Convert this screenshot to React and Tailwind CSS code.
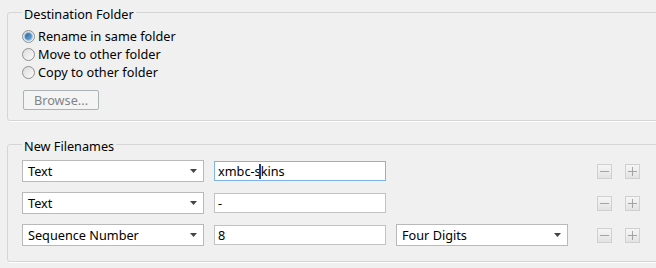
import React from 'react';

function Radio({ checked, label }) {
  return (
    <div className="flex items-center h-[18px]">
      <span className="w-[13px] h-[13px] rounded-full border border-[#8e8f8f] bg-gradient-to-br from-[#dcdcdc] to-[#fbfbfb] flex items-center justify-center">
        {checked && (
          <span className="w-[7px] h-[7px] rounded-full bg-gradient-to-br from-[#2a628f] to-[#6fb0e8] shadow-[0_0_0_1px_#9fc4e6]" />
        )}
      </span>
      <span className="ml-[3px] text-black">{label}</span>
    </div>
  );
}

function Combo({ value, width }) {
  return (
    <div className={`${width} h-[22px] bg-white border border-[#b9b9b9] flex items-center justify-between pl-[5px] pr-[6px]`}>
      <span className="text-black">{value}</span>
      <svg width="7" height="4" viewBox="0 0 7 4">
        <path d="M0 0 L7 0 L3.5 4 Z" fill="#444" />
      </svg>
    </div>
  );
}

function TextBox({ children, focused }) {
  return (
    <div
      className={`w-[172px] h-[20px] bg-white border flex items-center px-[3px] ${
        focused ? 'border-[#7eb4ea]' : 'border-[#c2c2c2]'
      }`}
    >
      {children}
    </div>
  );
}

function SmallButton({ plus }) {
  return (
    <div className="w-[15px] h-[15px] border border-[#d0d0d0] bg-gradient-to-b from-[#f6f6f6] to-[#e3e3e3] flex items-center justify-center">
      <svg width="9" height="9" viewBox="0 0 9 9">
        <path d="M0 4.5 H9" stroke="#a3a3a3" strokeWidth="1" />
        {plus && <path d="M4.5 0 V9" stroke="#a3a3a3" strokeWidth="1" />}
      </svg>
    </div>
  );
}

function Row({ type, value, focused, extra }) {
  return (
    <div className="flex items-center h-[22px]">
      <Combo value={type} width="w-[182px]" />
      <div className="ml-[10px]">
        <TextBox focused={focused}>{value}</TextBox>
      </div>
      <div className="ml-[10px] w-[172px]">
        {extra && <Combo value={extra} width="w-[172px]" />}
      </div>
      <div className="ml-[29px] flex items-center gap-[13px]">
        <SmallButton />
        <SmallButton plus />
      </div>
    </div>
  );
}

export default function App() {
  return (
    <div className="w-[656px] h-[268px] bg-[#f0f0f0] overflow-hidden pt-[2px] pl-[7px] font-['Segoe_UI','Noto_Sans',sans-serif] text-[12.7px] leading-[16px]">
      <fieldset className="w-[670px] h-[119px] border border-[#d5d5d5] rounded-[3px] shadow-[1px_1px_0_#fff] pl-[14px]">
        <legend className="px-[2px] pt-[4px] text-black">Destination Folder</legend>
        <div className="pt-[5px]">
          <Radio checked label="Rename in same folder" />
          <Radio label="Move to other folder" />
          <Radio label="Copy to other folder" />
        </div>
        <div className="mt-[9px] ml-[1px] w-[76px] h-[20px] border border-[#adb2b5] rounded-[2px] bg-[#f4f4f4] flex items-center justify-center text-[#838383]">
          Browse...
        </div>
      </fieldset>

      <fieldset className="mt-[13px] w-[670px] h-[128px] border border-[#d5d5d5] rounded-[3px] shadow-[1px_1px_0_#fff] pl-[14px]">
        <legend className="px-[2px] pt-[4px] text-black">New Filenames</legend>
        <div className="pt-[6px] flex flex-col gap-[10px]">
          <Row
            type="Text"
            focused
            value={
              <span className="text-black">
                xmbc-s
                <span className="relative inline-block w-0">
                  <span className="absolute left-[-2px] top-[-12px] w-[2px] h-[15px] bg-[#1c3f8c]" />
                </span>
                kins
              </span>
            }
          />
          <Row type="Text" value={<span className="text-black">-</span>} />
          <Row type="Sequence Number" value={<span className="text-black">8</span>} extra="Four Digits" />
        </div>
      </fieldset>
    </div>
  );
}
